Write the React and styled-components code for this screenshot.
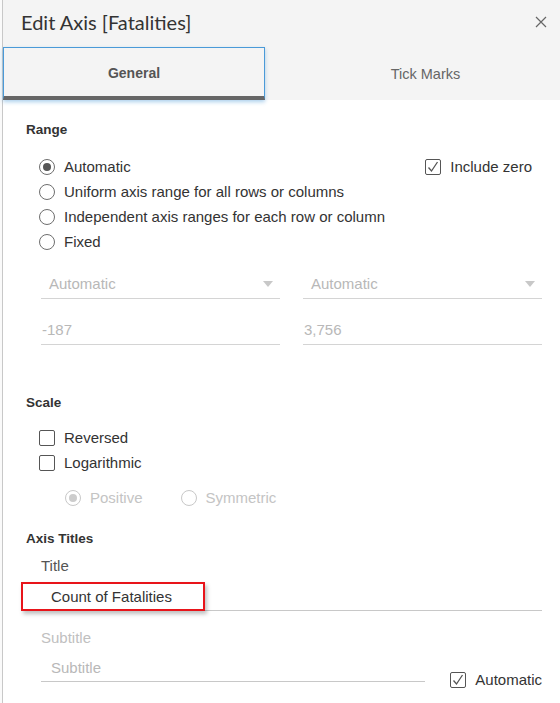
import React from "react";
import styled, { createGlobalStyle } from "styled-components";

const Global = createGlobalStyle`
html, body {
  margin: 0;
  padding: 0;
  background: #ffffff;
}
body {
  font-family: "Liberation Sans", Arial, sans-serif;
  color: #333333;
}
`

const Page = styled.div`
display: flex;
width: 560px;
height: 703px;
overflow: hidden;
`
const Strip = styled.div`
width: 2px;
background: #fafafa;
border-right: 1px solid #c8c8c8;
`
const Dialog = styled.div`
flex: 1;
display: flex;
flex-direction: column;
background: #ffffff;
`
const Header = styled.div`
background: #f4f4f4;
`
const TitleRow = styled.div`
height: 47px;
display: flex;
align-items: center;
justify-content: space-between;
padding: 0 13px 0 18px;
`
const Title = styled.div`
font-family: "Lato", "Open Sans", sans-serif;
font-weight: 400;
font-size: 20px;
color: #333333;
margin-top: -3px;
`
const Close = styled.button`
border: none;
background: none;
padding: 0;
width: 12px;
height: 12px;
margin-top: -4px;
display: flex;
`
const Tabs = styled.div`
display: flex;
height: 53px;
`
const Tab = styled.div`
width: ${p => p.active ? "262px" : "auto"};
flex: ${p => p.active ? "none" : 1};
display: flex;
align-items: center;
justify-content: center;
box-sizing: border-box;
font-size: ${p => p.active ? "14px" : "14.5px"};
font-weight: ${p => p.active ? 700 : 400};
color: ${p => p.active ? "#555555" : "#666666"};
border: ${p => p.active ? "1px solid #4a9ad8" : "none"};
border-bottom: ${p => p.active ? "4px solid #666666" : "none"};
box-shadow: ${p => p.active ? "0 2px 4px rgba(74,154,216,0.45)" : "none"};
padding-left: ${p => p.active ? 0 : 26}px;
padding-top: 1px;
`
const Body = styled.div`
padding: 21px 18px 0 23px;
display: flex;
flex-direction: column;
`
const Heading = styled.div`
font-size: 13.5px;
font-weight: 700;
line-height: 18px;
color: #333333;
margin-top: ${p => p.mt || 0}px;
`
const Group = styled.div`
display: flex;
flex-direction: column;
padding-left: ${p => p.indent || 13}px;
margin-top: ${p => p.mt || 0}px;
`
const Row = styled.div`
height: 25px;
display: flex;
align-items: center;
justify-content: ${p => p.spread ? "space-between" : "flex-start"};
gap: ${p => p.gap || 0}px;
padding-right: ${p => p.spread ? 10 : 0}px;
margin-top: ${p => p.mt || 0}px;
`
const Option = styled.label`
display: flex;
align-items: center;
gap: 9px;
font-size: 15px;
color: ${p => p.disabled ? "#c4c4c4" : "#333333"};
`
const Radio = styled.span`
width: 16px;
height: 16px;
box-sizing: border-box;
border-radius: 50%;
border: 1px solid ${p => p.disabled ? "#c8c8c8" : "#6e6e6e"};
display: flex;
align-items: center;
justify-content: center;
&::after {
  content: "";
  width: 8px;
  height: 8px;
  border-radius: 50%;
  background: ${p => p.disabled ? "#cccccc" : "#555555"};
  display: ${p => p.checked ? "block" : "none"};
}
`
const Box = styled.span`
width: 16px;
height: 16px;
box-sizing: border-box;
border: 1px solid #555555;
border-radius: 2px;
display: flex;
align-items: center;
justify-content: center;
`
const FieldGrid = styled.div`
display: grid;
grid-template-columns: 1fr 1fr;
column-gap: 23px;
row-gap: 15px;
padding-left: 15px;
margin-top: ${p => p.mt || 0}px;
`
const Field = styled.div`
position: relative;
height: ${p => p.h || 30}px;
display: flex;
align-items: center;
justify-content: space-between;
padding-left: ${p => p.pad || 0}px;
padding-right: 7px;
border-bottom: 1px solid ${p => p.dark ? "#c8c8c8" : "#d4d4d4"};
font-size: 15px;
color: ${p => p.muted ? "#b8b8b8" : "#333333"};
`
const Caret = styled.span`
width: 0;
height: 0;
border-left: 5px solid transparent;
border-right: 5px solid transparent;
border-top: 6px solid #c8c8c8;
margin-top: 2px;
`
const Label = styled.div`
font-size: 15px;
line-height: 20px;
color: ${p => p.muted ? "#c0c0c0" : "#555555"};
padding-left: 15px;
margin-top: ${p => p.mt || 0}px;
`
const Highlight = styled.div`
position: absolute;
left: -20px;
top: 0;
width: 184px;
height: 29px;
box-sizing: border-box;
border: 2px solid #e8141a;
box-shadow: 2px 3px 4px rgba(0,0,0,0.25);
pointer-events: none;
`
const SubRow = styled.div`
display: flex;
align-items: flex-start;
gap: 25px;
padding-left: 15px;
margin-top: ${p => p.mt || 0}px;
`
const Grow = styled.div`
flex: 1;
`

const Check = () => (
  <svg width="12" height="12" viewBox="0 0 12 12">
    <path d="M1.5 6.5 L4.5 10 L10.5 1" fill="none" stroke="#555" strokeWidth="1.3" />
  </svg>
)

const Checkbox = ({ checked, children }) => (
  <Option>
    <Box>{checked && <Check />}</Box>
    {children}
  </Option>
)

const RadioOption = ({ checked, disabled, children }) => (
  <Option disabled={disabled}>
    <Radio checked={checked} disabled={disabled} />
    {children}
  </Option>
)

export default function App() {
  return (
    <>
      <Global />
      <Page>
        <Strip />
        <Dialog>
          <Header>
            <TitleRow>
              <Title>Edit Axis [Fatalities]</Title>
              <Close aria-label="Close">
                <svg width="12" height="12" viewBox="0 0 12 12">
                  <path d="M1 1 L11 11 M11 1 L1 11" stroke="#666" strokeWidth="1.2" />
                </svg>
              </Close>
            </TitleRow>
            <Tabs>
              <Tab active>General</Tab>
              <Tab>Tick Marks</Tab>
            </Tabs>
          </Header>

          <Body>
            <Heading>Range</Heading>
            <Group mt={15}>
              <Row spread>
                <RadioOption checked>Automatic</RadioOption>
                <Checkbox checked>Include zero</Checkbox>
              </Row>
              <Row><RadioOption>Uniform axis range for all rows or columns</RadioOption></Row>
              <Row><RadioOption>Independent axis ranges for each row or column</RadioOption></Row>
              <Row><RadioOption>Fixed</RadioOption></Row>
            </Group>

            <FieldGrid mt={14}>
              <Field muted pad={8}>Automatic<Caret /></Field>
              <Field muted pad={8}>Automatic<Caret /></Field>
              <Field muted pad={1}>-187</Field>
              <Field muted pad={1}>3,756</Field>
            </FieldGrid>

            <Heading mt={49}>Scale</Heading>
            <Group mt={13}>
              <Row><Checkbox>Reversed</Checkbox></Row>
              <Row><Checkbox>Logarithmic</Checkbox></Row>
            </Group>
            <Group indent={39} mt={10}>
              <Row gap={38}>
                <RadioOption checked disabled>Positive</RadioOption>
                <RadioOption disabled>Symmetric</RadioOption>
              </Row>
            </Group>

            <Heading mt={20}>Axis Titles</Heading>
            <Label mt={8}>Title</Label>
            <Group indent={15} mt={6}>
              <Field h={28} pad={10} dark>
                Count of Fatalities
                <Highlight />
              </Field>
            </Group>
            <Label muted mt={17}>Subtitle</Label>
            <SubRow mt={6}>
              <Grow>
                <Field h={27} pad={10} muted dark>Subtitle</Field>
              </Grow>
              <Row mt={13}>
                <Checkbox checked>Automatic</Checkbox>
              </Row>
            </SubRow>
          </Body>
        </Dialog>
      </Page>
    </>
  )
}
